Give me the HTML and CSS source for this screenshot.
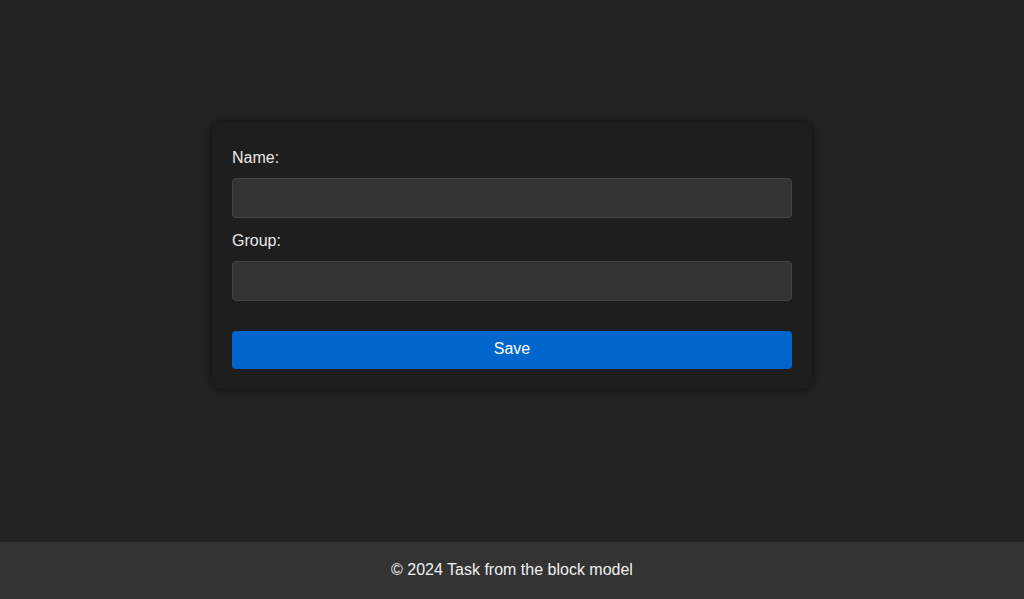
FILE: index.html
```html
<!DOCTYPE html>
<html lang="en">
<head>
<meta charset="utf-8">
<title>Form</title>
<link rel="stylesheet" href="styles.css">
</head>
<body>
<main class="main">
  <form class="card">
    <div class="field">
      <label class="label" for="name">Name:</label>
      <input class="input" id="name" type="text">
    </div>
    <div class="field">
      <label class="label" for="group">Group:</label>
      <input class="input" id="group" type="text">
    </div>
    <button class="button" type="button">Save</button>
  </form>
</main>
<footer class="footer">© 2024 Task from the block model</footer>
</body>
</html>
```
FILE: styles.css
```css
* { box-sizing: border-box; }
html, body { height: 100%; }
body {
  margin: 0;
  display: flex;
  flex-direction: column;
  background: #222222;
  color: #e8e8e8;
  font-family: "Liberation Sans", Arial, sans-serif;
  font-size: 16px;
}
.main {
  flex: 1;
  display: flex;
  flex-direction: column;
  align-items: center;
  padding-top: 122px;
}
.card {
  width: 600px;
  padding: 20px;
  background: #1e1e1e;
  border-radius: 8px;
  box-shadow: 0 0 10px rgba(0, 0, 0, 0.5);
  display: flex;
  flex-direction: column;
}
.field {
  display: flex;
  flex-direction: column;
  margin-bottom: 7px;
}
.label {
  display: block;
  line-height: 18px;
  margin: 7px 0 11px;
  color: #e8e8e8;
}
.input {
  height: 40px;
  width: 100%;
  background: #333333;
  border: 1px solid #444444;
  border-radius: 4px;
  color: #eeeeee;
  font: inherit;
  padding: 0 10px;
}
.button {
  margin-top: 23px;
  height: 38px;
  width: 100%;
  padding: 0 0 2px;
  background: #0066cc;
  color: #ffffff;
  border: none;
  border-radius: 4px;
  font: inherit;
  font-size: 16px;
}
.footer {
  height: 57px;
  flex-shrink: 0;
  display: flex;
  align-items: center;
  justify-content: center;
  padding-bottom: 2px;
  background: #333333;
  color: #f0f0f0;
}
```
